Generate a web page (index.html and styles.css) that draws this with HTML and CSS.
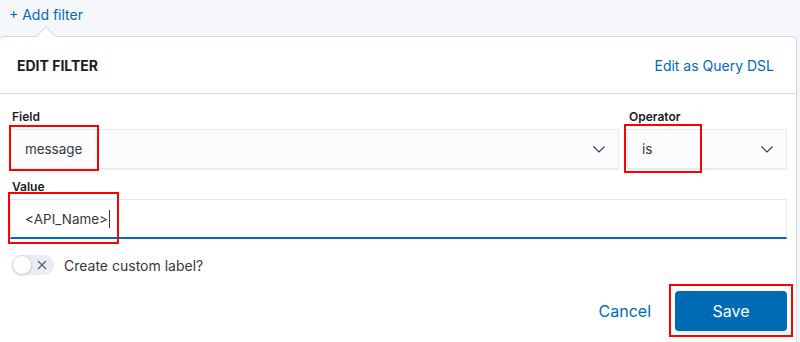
FILE: index.html
```html
<!DOCTYPE html>
<html>
<head>
<meta charset="utf-8">
<link rel="stylesheet" href="styles.css">
</head>
<body>
<div class="page">
  <div class="topbar"><span class="add-filter">+ Add filter</span></div>
  <div class="popover">
    <span class="arrow"></span>
    <div class="header">
      <span class="title">EDIT FILTER</span>
      <span class="dsl">Edit as Query DSL</span>
    </div>
    <div class="form">
      <div class="row">
        <div class="group grow">
          <div class="label">Field</div>
          <div class="select">
            <span>message</span>
            <svg class="chev" width="12" height="7" viewBox="0 0 12 7"><path d="M0.5 0.5 L6 6 L11.5 0.5" fill="none" stroke="#343741" stroke-width="1.1"/></svg>
          </div>
        </div>
        <div class="group op">
          <div class="label">Operator</div>
          <div class="select">
            <span>is</span>
            <svg class="chev" width="12" height="7" viewBox="0 0 12 7"><path d="M0.5 0.5 L6 6 L11.5 0.5" fill="none" stroke="#343741" stroke-width="1.1"/></svg>
          </div>
        </div>
      </div>
      <div class="group value-group">
        <div class="label">Value</div>
        <div class="input"><span>&lt;API_Name&gt;</span><span class="caret"></span></div>
      </div>
      <div class="switch-row">
        <span class="switch">
          <span class="thumb"></span>
          <svg class="x" width="10" height="10" viewBox="0 0 10 10"><path d="M1 1 L9 9 M9 1 L1 9" stroke="#535966" stroke-width="1.1" fill="none"/></svg>
        </span>
        <span class="switch-label">Create custom label?</span>
      </div>
      <div class="footer">
        <button class="btn-empty">Cancel</button>
        <button class="btn-save">Save</button>
      </div>
    </div>
  </div>
  <div class="mark mark-field"></div>
  <div class="mark mark-op"></div>
  <div class="mark mark-value"></div>
  <div class="mark mark-save"></div>
</div>
</body>
</html>
```

FILE: styles.css
```css
* { box-sizing: border-box; }
html, body { margin: 0; padding: 0; }
body {
  font-family: Inter, "Noto Sans", "Liberation Sans", sans-serif;
  color: #343741;
  background: #ffffff;
  width: 800px;
  height: 342px;
  overflow: hidden;
}
.page {
  position: relative;
  width: 800px;
  height: 342px;
  overflow: hidden;
  background: #f5f7fa;
}
.topbar {
  height: 36px;
  padding: 4px 0 0 9px;
}
.add-filter {
  font-size: 14px;
  line-height: 20px;
  color: #006bb4;
}
.popover {
  position: relative;
  margin: 0 3px 0 -1px;
  background: #ffffff;
  border: 1px solid #d3dae6;
  border-radius: 4px;
  height: 330px;
  box-shadow: 0 2px 6px rgba(0,0,0,0.04);
}
.arrow {
  position: absolute;
  top: -8px;
  left: 39px;
  width: 14px;
  height: 14px;
  background: #ffffff;
  border-top: 1px solid #d3dae6;
  border-left: 1px solid #d3dae6;
  transform: rotate(45deg);
}
.header {
  height: 57px;
  display: flex;
  align-items: center;
  justify-content: space-between;
  padding: 0 22px 0 17px;
  border-bottom: 1px solid #d3dae6;
}
.title {
  font-size: 14px;
  font-weight: 700;
  color: #1a1c21;
}
.dsl {
  font-size: 14px;
  color: #006bb4;
}
.form {
  padding: 14px 9px 0 10px;
}
.row {
  display: flex;
  gap: 8px;
}
.group { display: flex; flex-direction: column; }
.grow { flex: 1; }
.op { width: 160px; }
.label {
  font-size: 12px;
  font-weight: 600;
  line-height: 18px;
  color: #1a1c21;
  padding-left: 2px;
  margin-bottom: 3px;
}
.select {
  height: 40px;
  display: flex;
  align-items: center;
  justify-content: space-between;
  padding: 0 13px 0 14px;
  background: #fbfcfd;
  border: 1px solid #e6e9f0;
  box-shadow: 0 1px 1px rgba(152,162,179,0.15);
  font-size: 13.4px;
  color: #343741;
}
.chev { display: block; }
.value-group { margin-top: 9px; }
.input {
  height: 40px;
  display: flex;
  align-items: center;
  padding: 0 14px;
  background: #ffffff;
  border: 1px solid #e6e9f0;
  border-bottom: 2px solid #006bb4;
  font-size: 13.4px;
  color: #343741;
}
.caret {
  display: inline-block;
  width: 1px;
  height: 18px;
  background: #343741;
  margin-left: 1px;
}
.switch-row {
  margin-top: 16px;
  display: flex;
  align-items: center;
  gap: 10px;
  padding-left: 2px;
  height: 20px;
}
.switch {
  position: relative;
  width: 42px;
  height: 20px;
  border-radius: 10px;
  background: #e9edf3;
  display: inline-block;
}
.thumb {
  position: absolute;
  left: 0;
  top: 0;
  width: 20px;
  height: 20px;
  border-radius: 50%;
  background: #ffffff;
  border: 1px solid #d3dae6;
  box-shadow: 0 1px 2px rgba(0,0,0,0.15);
}
.x {
  position: absolute;
  left: 25px;
  top: 5px;
}
.switch-label {
  font-size: 14px;
  color: #343741;
}
.footer {
  margin-top: 16px;
  display: flex;
  justify-content: flex-end;
  align-items: center;
  gap: 12px;
  padding-right: 0;
}
.btn-empty {
  font-family: inherit;
  font-size: 16px;
  color: #006bb4;
  background: none;
  border: none;
  padding: 0 12px;
  height: 40px;
}
.btn-save {
  font-family: inherit;
  font-size: 16px;
  color: #ffffff;
  background: #006bb4;
  border: none;
  border-radius: 4px;
  width: 112px;
  height: 40px;
  box-shadow: 0 2px 2px rgba(0,0,0,0.1);
}
.mark {
  position: absolute;
  border: 2px solid #ff0000;
}
.mark-field { left: 9px; top: 125px; width: 90px; height: 46px; }
.mark-op { left: 624px; top: 124px; width: 78px; height: 49px; }
.mark-value { left: 8px; top: 192px; width: 111px; height: 52px; }
.mark-save { left: 669px; top: 284px; width: 124px; height: 53px; }
```
